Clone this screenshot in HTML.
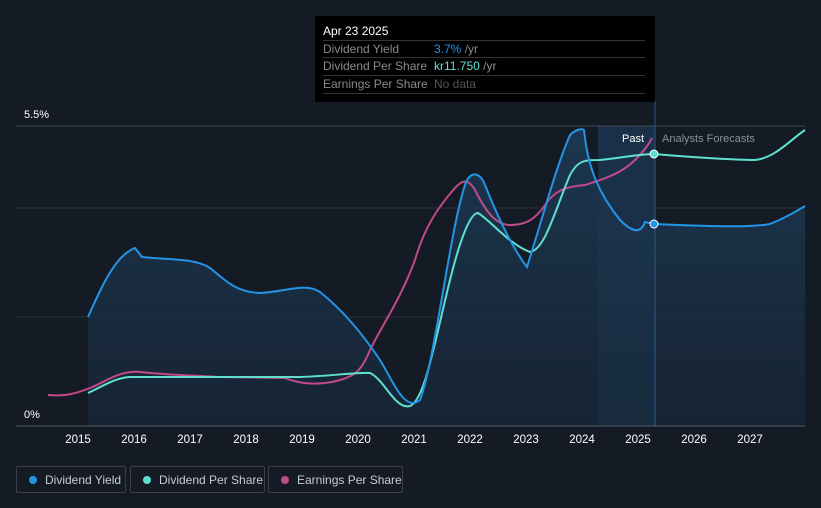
<!DOCTYPE html>
<html><head><meta charset="utf-8"><style>
body{margin:0;background:#151b25;width:821px;height:508px;overflow:hidden;font-family:"Liberation Sans",sans-serif;}
.tt{position:absolute;left:315px;top:16px;width:340px;height:86px;background:#000;}
.tt .d{position:absolute;left:8px;top:8px;color:#fff;font-size:12px;}
.row{position:absolute;left:8px;width:322px;border-top:1px solid #333;font-size:12px;color:#8a8a8a;height:17px;line-height:17px;white-space:nowrap;}
.row span{position:absolute;left:111px;}
.leg{position:absolute;top:466px;height:27px;border:1px solid #3a3f48;border-radius:2px;color:#c8ccd2;font-size:12px;line-height:26px;box-sizing:border-box;white-space:nowrap;}
.leg i{position:absolute;left:12px;top:9px;width:8px;height:8px;border-radius:50%;}
.leg b{font-weight:normal;position:absolute;left:28px;}
</style></head><body>
<svg width="821" height="508" style="position:absolute;left:0;top:0">
<defs><linearGradient id="g" x1="0" y1="0" x2="0" y2="1"><stop offset="0" stop-color="#1d3a55" stop-opacity=".9"/><stop offset="1" stop-color="#17283a" stop-opacity=".7"/></linearGradient></defs>
<rect x="598" y="126" width="57" height="300" fill="#1a3048"/>
<line x1="16" y1="126" x2="805" y2="126" stroke="#444a52"/>
<line x1="16" y1="208" x2="805" y2="208" stroke="#2a313b"/>
<line x1="16" y1="317" x2="805" y2="317" stroke="#2a313b"/>
<path d="M88,317 C100,290 115,255 135,248 L142,257 C170,260 195,258 210,268 C225,280 235,292 260,293 C285,292 305,282 320,292 C340,308 360,330 380,360 C395,385 405,412 420,400 C435,360 450,230 465,185 C470,170 480,172 485,185 C495,210 510,245 527,267 C545,210 555,170 570,135 C575,130 582,128 584,130 C588,170 600,195 620,220 C630,230 640,236 645,222 L654,224 C700,226 750,228 770,224 C785,218 795,212 805,206 L805,426 L88,426 Z" fill="url(#g)"/>
<line x1="655" y1="100" x2="655" y2="426" stroke="#2b5a86"/>
<line x1="16" y1="426" x2="805" y2="426" stroke="#555b63"/>
<path d="M48,395 C60,396 70,396 90,388 C105,382 120,370 140,372 C170,375 200,376 220,377 L285,378 C300,384 320,386 340,380 C355,376 362,370 370,350 C385,320 400,300 415,260 C425,225 440,205 455,188 C462,180 468,178 475,190 C485,210 495,225 510,225 C525,225 535,220 545,205 C555,190 565,187 585,185 C600,180 620,175 635,160 C645,150 650,142 652,138" fill="none" stroke="#c04a8a" stroke-width="2"/>
<path d="M88,393 C105,385 115,378 130,377 L300,377 C330,376 360,372 370,373 C385,380 395,410 410,406 C425,400 435,340 450,280 C460,240 470,213 478,213 C490,220 510,245 530,252 C545,250 555,210 570,175 C578,160 585,160 600,160 C620,158 640,154 654,154 C700,158 740,160 755,160 C775,158 790,140 805,130" fill="none" stroke="#5fe0cf" stroke-width="2"/>
<path d="M88,317 C100,290 115,255 135,248 L142,257 C170,260 195,258 210,268 C225,280 235,292 260,293 C285,292 305,282 320,292 C340,308 360,330 380,360 C395,385 405,412 420,400 C435,360 450,230 465,185 C470,170 480,172 485,185 C495,210 510,245 527,267 C545,210 555,170 570,135 C575,130 582,128 584,130 C588,170 600,195 620,220 C630,230 640,236 645,222 L654,224 C700,226 750,228 770,224 C785,218 795,212 805,206" fill="none" stroke="#2394e6" stroke-width="2"/>
<circle cx="654" cy="154" r="4" fill="#5fe0cf" stroke="#fff" stroke-width="1"/>
<circle cx="654" cy="224" r="4" fill="#2394e6" stroke="#fff" stroke-width="1"/>
<g font-size="11" fill="#fff" font-family="Liberation Sans">
<text x="24" y="118">5.5%</text><text x="24" y="418">0%</text>
<text x="622" y="142">Past</text><text x="662" y="142" fill="#8a9098">Analysts Forecasts</text>
</g>
<g font-size="11.5" fill="#fff" font-family="Liberation Sans" text-anchor="middle">
<text x="78" y="443">2015</text><text x="134" y="443">2016</text><text x="190" y="443">2017</text><text x="246" y="443">2018</text><text x="302" y="443">2019</text><text x="358" y="443">2020</text><text x="414" y="443">2021</text><text x="470" y="443">2022</text><text x="526" y="443">2023</text><text x="582" y="443">2024</text><text x="638" y="443">2025</text><text x="694" y="443">2026</text><text x="750" y="443">2027</text>
</g>
</svg>
<div class="tt"><div class="d">Apr 23 2025</div>
<div class="row" style="top:24px">Dividend Yield<span><em style="font-style:normal;color:#2394e6">3.7%</em> /yr</span></div>
<div class="row" style="top:41px">Dividend Per Share<span><em style="font-style:normal;color:#5fe0cf">kr11.750</em> /yr</span></div>
<div class="row" style="top:59px;border-bottom:1px solid #333">Earnings Per Share<span style="color:#555">No data</span></div>
</div>
<div class="leg" style="left:16px;width:110px"><i style="background:#2394e6"></i><b>Dividend Yield</b></div>
<div class="leg" style="left:130px;width:135px"><i style="background:#5fe0cf"></i><b>Dividend Per Share</b></div>
<div class="leg" style="left:268px;width:135px"><i style="background:#c04a8a"></i><b>Earnings Per Share</b></div>
</body></html>
